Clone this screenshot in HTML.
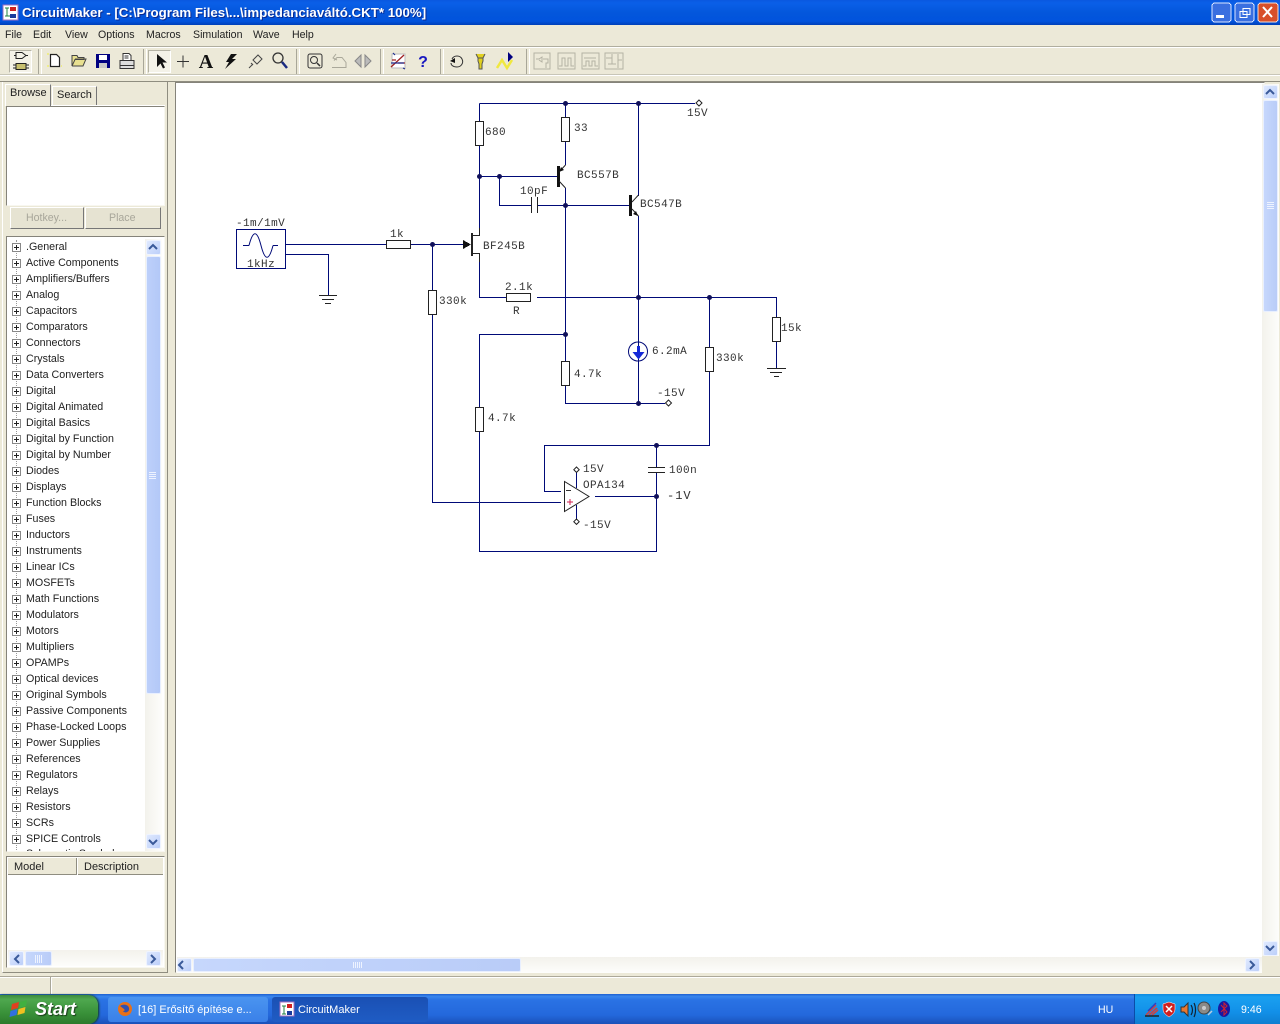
<!DOCTYPE html>
<html><head><meta charset="utf-8"><title>CircuitMaker</title>
<style>
html,body{margin:0;padding:0}
body{width:1280px;height:1024px;overflow:hidden;position:relative;background:#ece9d8;font-family:"Liberation Sans",sans-serif;font-size:10.6px;color:#222}
.a{position:absolute;box-sizing:border-box}
.t{position:absolute;white-space:nowrap;line-height:14px}
#title{left:0;top:0;width:1280px;height:25px;background:linear-gradient(#0a58e0 0,#0a5fe8 12%,#0457dc 50%,#0153dd 85%,#0040b8 100%)}
.sunk{border:1px solid #85837a;border-right-color:#f8f7f0;border-bottom-color:#f8f7f0;background:#fff}
.sb{background:linear-gradient(90deg,#f3f2ec,#fdfdfb)}
.sbh{background:linear-gradient(#f3f2ec,#fdfdfb)}
.btn{background:linear-gradient(135deg,#dfe9fe,#bccffa);border:1px solid #eef3ff;border-radius:2px}
.th{background:linear-gradient(90deg,#c6d7fc,#b9ccf8);border:1px solid #e8efff;border-radius:2px}
.sep{position:absolute;top:49px;width:2px;height:25px;border-left:1px solid #a8a698;border-right:1px solid #fff}
#list{position:absolute;left:26px;top:238px;line-height:16px;color:#222;font-size:10.7px;white-space:nowrap}
#list div{height:16px;position:relative}
#list div:before{content:"";position:absolute;left:-14px;top:4px;width:7px;height:7px;border:1px solid #888;background:linear-gradient(#222,#222) center/5px 1px no-repeat,linear-gradient(#222,#222) center/1px 5px no-repeat,#fff}
svg{position:absolute;left:0;top:0}
</style></head>
<body>
<div class="a" id="title"></div>
<div class="t" style="left:22px;top:6px;color:#fff;font-weight:bold;font-size:13.3px;text-shadow:1px 1px 0 #0a2a90">CircuitMaker - [C:\Program Files\...\impedanciaváltó.CKT* 100%]</div>

<div class="t" style="left:5px;top:28px">File</div>
<div class="t" style="left:33px;top:28px">Edit</div>
<div class="t" style="left:65px;top:28px">View</div>
<div class="t" style="left:98px;top:28px">Options</div>
<div class="t" style="left:146px;top:28px">Macros</div>
<div class="t" style="left:193px;top:28px">Simulation</div>
<div class="t" style="left:253px;top:28px">Wave</div>
<div class="t" style="left:292px;top:28px">Help</div>

<div class="a" style="left:0;top:46px;width:1280px;height:1px;background:#b0ae9f"></div>
<div class="a" style="left:0;top:47px;width:1280px;height:1px;background:#fff"></div>
<div class="a" style="left:0;top:74px;width:1280px;height:1px;background:#c8c6b8"></div>
<div class="a" style="left:0;top:75px;width:1280px;height:1px;background:#fff"></div>
<div class="a" style="left:0;top:81px;width:1280px;height:1px;background:#8f8d80"></div>
<div class="sep" style="left:38px"></div><div class="sep" style="left:143px"></div><div class="sep" style="left:296px"></div><div class="sep" style="left:380px"></div><div class="sep" style="left:440px"></div><div class="sep" style="left:526px"></div>
<div class="a" style="left:9px;top:50px;width:23px;height:23px;background:#f4f2e8;border:1px solid #b5b3a5;border-right-color:#fff;border-bottom-color:#fff"></div>
<div class="a" style="left:148px;top:50px;width:23px;height:23px;background:#f4f2e8;border:1px solid #b5b3a5;border-right-color:#fff;border-bottom-color:#fff"></div>

<!-- left panel -->
<div class="a" style="left:2px;top:82px;width:166px;height:891px;border-left:1px solid #fff;border-right:1px solid #8f8d80;border-bottom:1px solid #8f8d80"></div>
<div class="a" style="left:5px;top:84px;width:46px;height:22px;background:#ece9d8;border:1px solid #fff;border-right:1px solid #777;border-bottom:0;z-index:2"></div>
<div class="a" style="left:52px;top:86px;width:45px;height:19px;background:#ece9d8;border:1px solid #fff;border-right:1px solid #777;border-bottom:0"></div>
<div class="t" style="left:10px;top:86px;z-index:3;font-size:11px">Browse</div>
<div class="t" style="left:57px;top:88px;font-size:11px">Search</div>
<div class="a" style="left:7px;top:105px;width:158px;height:1px;background:#fff"></div>
<div class="a sunk" style="left:6px;top:106px;width:159px;height:100px;z-index:1"></div>
<div class="a" style="left:10px;top:207px;width:74px;height:22px;background:#e6e3d2;border:1px solid #fff;border-right-color:#777;border-bottom-color:#777"></div>
<div class="a" style="left:85px;top:207px;width:76px;height:22px;background:#e6e3d2;border:1px solid #fff;border-right-color:#777;border-bottom-color:#777"></div>
<div class="t" style="left:26px;top:211px;color:#a8a69a">Hotkey...</div>
<div class="t" style="left:109px;top:211px;color:#a8a69a">Place</div>

<div class="a sunk" style="left:6px;top:236px;width:159px;height:616px;overflow:hidden">
 <div class="a sb" style="left:138px;top:2px;width:17px;height:612px"></div>
 <div class="a th" style="left:139px;top:19px;width:15px;height:438px;background:linear-gradient(90deg,#bdd0fa,#b3c8f8)"></div>
 <div class="a btn" style="left:139px;top:3px;width:15px;height:15px"></div>
 <div class="a btn" style="left:139px;top:597px;width:15px;height:15px"></div>
</div>
<div class="a" style="left:16px;top:240px;height:610px;width:0;border-left:1px dotted #999"></div>
<div id="list" style="top:239px">
<div>.General</div><div>Active Components</div><div>Amplifiers/Buffers</div><div>Analog</div><div>Capacitors</div><div>Comparators</div><div>Connectors</div><div>Crystals</div><div>Data Converters</div><div>Digital</div><div>Digital Animated</div><div>Digital Basics</div><div>Digital by Function</div><div>Digital by Number</div><div>Diodes</div><div>Displays</div><div>Function Blocks</div><div>Fuses</div><div>Inductors</div><div>Instruments</div><div>Linear ICs</div><div>MOSFETs</div><div>Math Functions</div><div>Modulators</div><div>Motors</div><div>Multipliers</div><div>OPAMPs</div><div>Optical devices</div><div>Original Symbols</div><div>Passive Components</div><div>Phase-Locked Loops</div><div>Power Supplies</div><div>References</div><div>Regulators</div><div>Relays</div><div>Resistors</div><div>SCRs</div><div>SPICE Controls</div>
</div>
<div class="a" style="left:7px;top:849px;width:138px;height:2px;overflow:hidden"><div class="t" style="left:19px;top:-2px;font-size:10.7px;color:#222">Schematic Symbols</div></div>

<div class="a sunk" style="left:6px;top:856px;width:159px;height:112px"></div>
<div class="a" style="left:8px;top:858px;width:69px;height:17px;background:#ece9d8;border-right:1px solid #8f8d80;border-bottom:1px solid #8f8d80"></div>
<div class="a" style="left:78px;top:858px;width:85px;height:17px;background:#ece9d8;border-bottom:1px solid #8f8d80"></div>
<div class="t" style="left:14px;top:860px;font-size:11px">Model</div>
<div class="t" style="left:84px;top:860px;font-size:11px">Description</div>
<div class="a sbh" style="left:8px;top:950px;width:155px;height:16px"></div>
<div class="a btn" style="left:9px;top:951px;width:15px;height:15px"></div>
<div class="a th" style="left:25px;top:951px;width:27px;height:15px"></div>
<div class="a btn" style="left:146px;top:951px;width:15px;height:15px"></div>

<!-- canvas -->
<div class="a sunk" style="left:175px;top:82px;width:1090px;height:891px"></div>
<div class="a sb" style="left:1262px;top:84px;width:17px;height:872px"></div>
<div class="a th" style="left:1263px;top:100px;width:15px;height:212px"></div>
<div class="a btn" style="left:1263px;top:85px;width:15px;height:14px"></div>
<div class="a btn" style="left:1263px;top:941px;width:15px;height:15px"></div>
<div class="a sbh" style="left:177px;top:957px;width:1085px;height:16px"></div>
<div class="a" style="left:1262px;top:956px;width:18px;height:18px;background:#ece9d8"></div>
<div class="a btn" style="left:177px;top:958px;width:15px;height:14px"></div>
<div class="a th" style="left:193px;top:958px;width:328px;height:14px"></div>
<div class="a btn" style="left:1245px;top:958px;width:15px;height:14px"></div>

<!-- status -->
<div class="a" style="left:0;top:976px;width:1280px;height:1px;background:#aca899"></div>
<div class="a" style="left:0;top:977px;width:1280px;height:1px;background:#fff"></div>
<div class="a" style="left:50px;top:977px;width:2px;height:17px;border-left:1px solid #a8a698;border-right:1px solid #fff"></div>

<!-- taskbar -->
<div class="a" style="left:0;top:994px;width:1280px;height:30px;background:linear-gradient(#1d5fd0 0,#3a86ec 8%,#2a72e4 20%,#2468dc 70%,#1a50b8 100%)"></div>
<div class="a" style="left:0;top:995px;width:98px;height:29px;background:linear-gradient(#3c8a3c 0,#4fa84f 15%,#3a923a 60%,#2c7a2c 100%);border-radius:0 10px 10px 0;box-shadow:1px 0 2px #123a10"></div>
<div class="t" style="left:35px;top:999px;color:#fff;font-weight:bold;font-style:italic;font-size:18px;line-height:20px;text-shadow:1px 1px 1px #1a3a1a">Start</div>
<div class="a" style="left:108px;top:997px;width:160px;height:25px;background:linear-gradient(#4a94f0,#3a80e8);border-radius:3px"></div>
<div class="a" style="left:272px;top:997px;width:156px;height:25px;background:linear-gradient(#1a50b4,#1f5cc4);border-radius:3px"></div>
<div class="t" style="left:138px;top:1003px;color:#fff;font-size:11px">[16] Erősítő építése e...</div>
<div class="t" style="left:298px;top:1003px;color:#fff;font-size:11px">CircuitMaker</div>
<div class="a" style="left:1134px;top:994px;width:146px;height:30px;background:linear-gradient(#0f8ae0 0,#1aa0f0 10%,#1290e8 60%,#0f7ed0 100%);border-left:1px solid #0b4ca8"></div>
<div class="t" style="left:1098px;top:1003px;color:#fff">HU</div>
<div class="t" style="left:1241px;top:1003px;color:#fff">9:46</div>

<svg width="1280" height="1024" viewBox="0 0 1280 1024" shape-rendering="crispEdges">
<!-- title icon & buttons -->
<g>
<rect x="3" y="5" width="15" height="15" fill="#fff" stroke="#a070c0"/>
<rect x="10" y="7" width="6" height="4" fill="#d02020"/><rect x="10" y="14" width="6" height="4" fill="#1a3a9c"/>
<path d="M5 8h4M7 8v8M5 16h5" stroke="#208040" fill="none"/>
<rect x="1212" y="3" width="19" height="19" rx="3" fill="#3a6fe0" stroke="#dbe6ff"/>
<rect x="1216" y="15" width="8" height="3" fill="#fff"/>
<rect x="1235" y="3" width="19" height="19" rx="3" fill="#3a6fe0" stroke="#dbe6ff"/>
<path d="M1243 8.500h7v6h-7zM1240 11.500h7v6h-7z" fill="none" stroke="#fff"/>
<rect x="1258" y="3" width="20" height="19" rx="3" fill="#d8502a" stroke="#f4dcd0"/>
</g>
<path d="M1263 7l9 10M1272 7l-9 10" stroke="#fff" stroke-width="2" shape-rendering="auto"/>

<!-- toolbar icons -->
<g fill="none" stroke="#222" shape-rendering="auto">
<path d="M16 52.500h6l4 3-4 3h-6zM14 55.500h2M26 55.500h2" />
<rect x="16" y="63.500" width="10" height="6" fill="#c8c070"/><path d="M13 65h3M13 68h3M26 65h3M26 68h3"/>
<path d="M50.500 54.500h6l3 3v9h-9z" fill="#fff" stroke-width="1.200"/><path d="M47 54h2M47 66h2M61 66h1" stroke="#f0f040"/>
<path d="M72 66V55.500h5l1 2h6v2h-9zM72 66h11l3-7h-11" fill="#e8e090" stroke="#444"/>
<rect x="96" y="54" width="14" height="14" fill="#000080" stroke="none"/><rect x="99" y="55" width="8" height="5" fill="#fff" stroke="none"/><rect x="99" y="63" width="8" height="5" fill="#c8c8c8" stroke="none"/>
<path d="M123 53.500h6l2 2v5h-8zM124.500 56h4M124.500 58h4" fill="#fff" stroke="#333"/><path d="M120 60.500h14v5h-14zM120 65.500h14v3h-14z" fill="#ddd" stroke="#333"/>
<path d="M157 54l0 13 3.500-3.500 2.500 5 2-1-2.500-5h4.500z" fill="#111" stroke="none"/>
<path d="M177 61.500h12M183 55.500v12" stroke="#333"/>
<text x="206" y="68" text-anchor="middle" font-family="'Liberation Serif',serif" font-weight="bold" font-size="20" fill="#111" stroke="none">A</text>
<path d="M231 54l6 0-5 5h4l-11 10 4-7h-3z" fill="#111" stroke="none"/>
<path d="M253 60l5-5 4 4-5 5zM253 64l-4 4M251 63l2 2" stroke="#444"/>
<circle cx="278" cy="58" r="5" stroke="#333" stroke-width="1.300"/><path d="M282 62l5 6" stroke="#1a2a80" stroke-width="2.500"/>
<rect x="308" y="54" width="14" height="14" rx="2" stroke="#333"/><circle cx="314" cy="60" r="3.500" stroke="#333"/><path d="M317 63l3 3" stroke="#333" stroke-width="1.500"/>
<path d="M332 67.500h14v-5l-4-5h-5l-3 3M336 54l-3 4 4 2" stroke="#aaa89a"/>
<path d="M361 55l-6 6 6 6zM365 55l6 6-6 6z" stroke="#888" fill="#bbb"/>
<rect x="392" y="54" width="13" height="14" fill="#fff" stroke="#bbb"/><path d="M391 67l13-12M392 60h4M398 63h7" stroke="#a02020" stroke-width="1.300"/><path d="M391 63h13M393 53l2 2M403 68l2 1" stroke="#203090" stroke-width="1.200"/>
<text x="423" y="67" text-anchor="middle" font-family="'Liberation Sans',sans-serif" font-weight="bold" font-size="16" fill="#1818c0" stroke="none">?</text>
<path d="M452 59c2-4 8-4 10 0s-1 8-5 8-6-2-6-4" stroke="#333"/><path d="M450 61l5-3v5z" fill="#111" stroke="none"/>
<path d="M476 54l2 4h5l2-4M478 58h5v3l-1 3v5h-3v-5l-1-3z" fill="#e0d020" stroke="#555"/>
<path d="M497 68l5-8 5 8 5-8" stroke="#f0e840" stroke-width="2.500"/><path d="M508 52l5 5-5 5z" fill="#000080" stroke="none"/>
<g stroke="#b4b2a4">
<rect x="534" y="53" width="16" height="16"/><path d="M536 59h3l3-2v5l-3-2M543 59h5v4h-2v5"/>
<rect x="558" y="53" width="17" height="16"/><path d="M559 66h3v-8h3v8h3v-8h3v8h3"/>
<rect x="582" y="53" width="17" height="16"/><path d="M583 66h3v-5h3v5h3v-5h3v5h3M584 58h12"/>
<rect x="605" y="53" width="18" height="16"/><path d="M606 58h6v6M612 54v4M618 54v14M618 60h4M608 64h8"/>
</g>
</g>

<!-- scroll arrows -->
<g fill="none" stroke="#3a5a9a" stroke-width="2" shape-rendering="auto">
<path d="M149 249l4-4 4 4M149 840l4 4 4-4M19 955l-4 4 4 4M151 955l4 4-4 4M183 961l-4 4 4 4M1250 961l4 4-4 4M1266 94l4-4 4 4M1266 946l4 4 4-4"/>
</g>
<path d="M35.500 955v8M37.500 955v8M39.500 955v8M41.500 955v8M353.500 962v6M355.500 962v6M357.500 962v6M359.500 962v6M361.500 962v6M1267 202.500h7M1267 204.500h7M1267 206.500h7M1267 208.500h7M149 472.500h7M149 474.500h7M149 476.500h7M149 478.500h7" stroke="#eef3ff"/>

<!-- taskbar icons -->
<g shape-rendering="auto">
<path d="M12 1004l7-2-1 6-7 2z" fill="#e04020"/><path d="M20 1002l7-2-1 6-7 2z" fill="#40b040"/><path d="M10.500 1011l7-2-1 6-7 2z" fill="#3070e0"/><path d="M18.500 1009l7-2-1 6-7 2z" fill="#f0c020"/>
<circle cx="125" cy="1009" r="7" fill="#e87018"/><path d="M120 1006c4-3 10-1 9 4-1 3-5 3-6 1 2 0 2-1 1-2z" fill="#3050b0"/>
<rect x="280" y="1002" width="14" height="14" fill="#fff" stroke="#a070c0"/><rect x="287" y="1004" width="5" height="4" fill="#d02020"/><rect x="287" y="1011" width="5" height="4" fill="#1a3a9c"/><path d="M282 1006h4M284 1006v8M282 1014h4" stroke="#208040" fill="none"/>
<path d="M1146 1015l10-10M1149 1015l8-7M1152 1015l6-5" stroke="#d04040" stroke-width="1.500" fill="none"/><path d="M1145 1016h14" stroke="#222" stroke-width="1.500"/><path d="M1148 1011l8-8" stroke="#3040c0" stroke-width="1.500"/>
<path d="M1163 1004l6-2 6 2v5c0 4-3 6-6 8-3-2-6-4-6-8z" fill="#d02020" stroke="#ffffff" stroke-width=".5"/><path d="M1166 1006l6 6M1172 1006l-6 6" stroke="#fff" stroke-width="1.500"/>
<path d="M1181 1007h3l4-4v13l-4-4h-3z" fill="#e87830" stroke="#333"/><path d="M1191 1005c2 3 2 7 0 10M1194 1003c2 4 2 10 0 14" stroke="#123" fill="none" stroke-width="1.200"/>
<circle cx="1204" cy="1008" r="6" fill="#8a8a88" stroke="#444"/><circle cx="1204" cy="1008" r="2" fill="#ccc"/><path d="M1208 1015l4-4" stroke="#bcd" stroke-width="1.500"/>
<ellipse cx="1224" cy="1009" rx="6" ry="8" fill="#1818a0"/><path d="M1221 1005l6 7-3 3v-12l3 3-6 6" stroke="#d02030" fill="none"/>
</g>

<!-- schematic wires -->
<g fill="none" stroke="#000a78" stroke-width="1">
<path d="M479.500 103.500H695M479.500 103.500V121M479.500 145V228"/>
<path d="M479.500 176.500H557M499.500 176.500V205.500H531M538 205.500H629"/>
<path d="M565.500 103.500V117M565.500 142V165M565.500 188V403.500H665"/>
<path d="M638.500 103.500V196M638.500 216V403.500"/>
<path d="M285 244.500H386M411 244.500H463M432.500 244.500V290M432.500 314V502.500H561"/>
<path d="M285 254.500H328.500V295"/>
<path d="M479.500 262V297.500H506M537 297.500H776.500V317M776.500 342V368"/>
<path d="M709.500 297.500V347M709.500 371V445.500H544.500V491.500H561"/>
<path d="M565.500 334.500H479.500V407M479.500 431V551.500H656.500V472M656.500 467V445.500"/>
<path d="M595 496.500H656.500"/>
<path d="M576.500 472V488M576.500 505V519"/>
<rect x="236.500" y="229.500" width="49" height="39"/>
<path d="M243 245.500h6M273 245.500h5"/>
</g>
<g fill="#fff" stroke="#222" stroke-width="1" >
<path d="M475.500 121.500h8v24h-8zM561.500 117.500h8v24h-8zM386.500 240.500h24v8h-24zM506.500 293.500h24v8h-24zM428.500 290.500h8v24h-8zM772.500 317.500h8v24h-8zM705.500 347.500h8v24h-8zM561.500 361.500h8v24h-8zM475.500 407.500h8v24h-8z"/>
</g>
<!-- components -->
<g fill="none" stroke="#222">
<path d="M249 245.500Q255 222 261 245.500T273 245.500" stroke="#000a78" shape-rendering="auto"/>
<path d="M319 295.500h18M322 299.500h12M325 303.500h6M767 368.500h19M770 372.500h12M774 376.500h5"/>
<path d="M531.500 197v16M537.500 197v16M648 467.500h17M648 472.500h17"/>
<path d="M471.500 233v23M472.500 233v23"/>
<path d="M472 235.500h7.500V228M472 253.500h7.500V262"/>
</g>
<path d="M463 240l8 4.500-8 4.500z" fill="#111"/>
<rect x="557" y="166" width="3" height="21" fill="#111"/>
<rect x="629" y="195" width="3" height="21" fill="#111"/>
<g shape-rendering="auto">
<path d="M559 172l6.500-7M559 181l6.500 7M632 202l6.500-7M632 209l6.500 7" stroke="#222" fill="none"/>
<path d="M559 172l2-5 3 3zM638 216l-5-2 3-3z" fill="#111"/>
<circle cx="638" cy="351.500" r="9.500" fill="#fff" stroke="#000a78"/>
<path d="M638.500 342v6" stroke="#000a78"/>
<path d="M632.500 352h12l-6 7.500z" fill="#1428d8"/><rect x="637" y="346" width="3" height="7" fill="#1428d8"/><path d="M638.500 359v3" stroke="#000a78"/>
<path d="M564.500 481.500V511.500L589 496.500z" fill="#fff" stroke="#222"/>
<path d="M566 490.500h5" stroke="#333"/><path d="M567 502h6M570 499v6" stroke="#d02050" stroke-width="1"/>
<path d="M699 100l3 3-3 3-3-3zM668.500 400l3 3-3 3-3-3zM576.500 467l2.700 2.700-2.700 2.700-2.700-2.700zM576.500 519l2.700 2.700-2.700 2.700-2.700-2.700z" fill="#fff" stroke="#222"/>
<g fill="#10105a">
<circle cx="565.500" cy="103.500" r="2.500"/><circle cx="638.500" cy="103.500" r="2.500"/><circle cx="479.500" cy="176.500" r="2.500"/><circle cx="499.500" cy="176.500" r="2.500"/><circle cx="565.500" cy="205.500" r="2.500"/><circle cx="432.500" cy="244.500" r="2.500"/><circle cx="638.500" cy="297.500" r="2.500"/><circle cx="709.500" cy="297.500" r="2.500"/><circle cx="565.500" cy="334.500" r="2.500"/><circle cx="638.500" cy="403.500" r="2.500"/><circle cx="656.500" cy="445.500" r="2.500"/><circle cx="656.500" cy="496.500" r="2.500"/>
</g>
<g font-family="'Liberation Mono',monospace" font-size="11" fill="#333" letter-spacing=".42">
<text x="236" y="226">-1m/1mV</text><text x="247" y="267">1kHz</text><text x="390" y="237">1k</text>
<text x="485" y="135">680</text><text x="574" y="131">33</text><text x="577" y="178">BC557B</text><text x="520" y="194">10pF</text>
<text x="640" y="207">BC547B</text><text x="483" y="249">BF245B</text><text x="505" y="290">2.1k</text><text x="513" y="314">R</text>
<text x="439" y="304">330k</text><text x="781" y="331">15k</text><text x="652" y="354">6.2mA</text><text x="716" y="361">330k</text>
<text x="574" y="377">4.7k</text><text x="657" y="396">-15V</text><text x="488" y="421">4.7k</text><text x="583" y="472">15V</text>
<text x="583" y="488">OPA134</text><text x="669" y="473">100n</text><text x="583" y="528">-15V</text><text x="687" y="116">15V</text>
<text x="667" y="499" font-size="12" letter-spacing="1">-1V</text>
</g>
</g>
</svg>
</body></html>
